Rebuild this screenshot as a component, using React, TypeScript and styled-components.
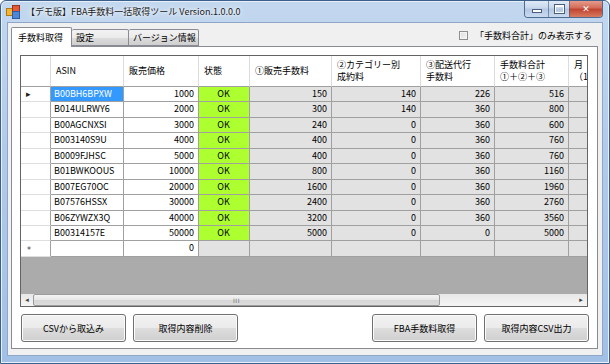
import React from "react"
import styled, { createGlobalStyle } from "styled-components"

type Fee = {
  asin: string
  price: number
  sale: number
  category: number
  fba: number
  total: number
}

const rows: Fee[] = [
  { asin: "B00BH6BPXW", price: 1000, sale: 150, category: 140, fba: 226, total: 516 },
  { asin: "B014ULRWY6", price: 2000, sale: 300, category: 140, fba: 360, total: 800 },
  { asin: "B00AGCNXSI", price: 3000, sale: 240, category: 0, fba: 360, total: 600 },
  { asin: "B003140S9U", price: 4000, sale: 400, category: 0, fba: 360, total: 760 },
  { asin: "B0009FJHSC", price: 5000, sale: 400, category: 0, fba: 360, total: 760 },
  { asin: "B01BWKOOUS", price: 10000, sale: 800, category: 0, fba: 360, total: 1160 },
  { asin: "B007EG70OC", price: 20000, sale: 1600, category: 0, fba: 360, total: 1960 },
  { asin: "B07576HSSX", price: 30000, sale: 2400, category: 0, fba: 360, total: 2760 },
  { asin: "B06ZYWZX3Q", price: 40000, sale: 3200, category: 0, fba: 360, total: 3560 },
  { asin: "B00314157E", price: 50000, sale: 5000, category: 0, fba: 0, total: 5000 },
]

// column widths in px; the last one is cut off by the grid edge
const W = { head: 30, asin: 73, price: 75, state: 51, sale: 82, category: 89, fba: 74, total: 74, month: 80 }

const GREEN = "#adff2f"
const GRAY = "#e2e2e2"

const AppIcon = () => (
  <svg width="14" height="14" viewBox="0 0 14 14">
    <rect x="0.5" y="3.5" width="7" height="7" fill="#f2b632" stroke="#b07a12" />
    <rect x="6.5" y="0.5" width="7" height="7" fill="#e25a3a" stroke="#9c3320" />
    <rect x="6.5" y="6.5" width="7" height="7" fill="#4f86d6" stroke="#2b5ca4" />
  </svg>
)

const App: React.FC = () => (
  <>
    <GlobalStyle />
    <Window>
      <TitleBar>
        <AppIcon />
        <Title>【デモ版】FBA手数料一括取得ツール Version.1.0.0.0</Title>
        <Caption>
          <CaptionButton $w={23}>
            <MinGlyph />
          </CaptionButton>
          <CaptionButton $w={20}>
            <MaxGlyph />
          </CaptionButton>
          <CaptionButton $w={32} $close>
            ✕
          </CaptionButton>
        </Caption>
      </TitleBar>

      <Client>
        <TabStrip>
          <Tab $active $w={61}>手数料取得</Tab>
          <Tab $w={57}>設定</Tab>
          <Tab $w={70}>バージョン情報</Tab>
          <CheckLabel>
            <CheckBox />
            「手数料合計」のみ表示する
          </CheckLabel>
        </TabStrip>

        <TabPanel>
          <Grid>
            <HeaderRow>
              <HeadCell $w={W.head} />
              <HeadCell $w={W.asin}>ASIN</HeadCell>
              <HeadCell $w={W.price}>販売価格</HeadCell>
              <HeadCell $w={W.state}>状態</HeadCell>
              <HeadCell $w={W.sale}>①販売手数料</HeadCell>
              <HeadCell $w={W.category}>
                ②カテゴリー別
                <br />
                成約料
              </HeadCell>
              <HeadCell $w={W.fba}>
                ③配送代行
                <br />
                手数料
              </HeadCell>
              <HeadCell $w={W.total}>
                手数料合計
                <br />
                ①＋②＋③
              </HeadCell>
              <HeadCell $w={W.month}>
                月
                <br />
                （1
              </HeadCell>
            </HeaderRow>

            {rows.map((r, i) => (
              <Row key={r.asin}>
                <RowHead>{i === 0 && <Pointer>▸</Pointer>}</RowHead>
                <Cell $w={W.asin} $bg={i === 0 ? "#3399ff" : "#fff"} $color={i === 0 ? "#fff" : "#000"}>
                  {r.asin}
                </Cell>
                <Cell $w={W.price} $align="right">{r.price}</Cell>
                <Cell $w={W.state} $align="center" $bg={GREEN}>OK</Cell>
                <Cell $w={W.sale} $align="right" $bg={GRAY}>{r.sale}</Cell>
                <Cell $w={W.category} $align="right" $bg={GRAY}>{r.category}</Cell>
                <Cell $w={W.fba} $align="right" $bg={GRAY}>{r.fba}</Cell>
                <Cell $w={W.total} $align="right" $bg={GRAY}>{r.total}</Cell>
                <Cell $w={W.month} $bg={GRAY} />
              </Row>
            ))}

            <Row>
              <RowHead>
                <Star>*</Star>
              </RowHead>
              <Cell $w={W.asin} />
              <Cell $w={W.price} $align="right">0</Cell>
              <Cell $w={W.state} $bg={GRAY} />
              <Cell $w={W.sale} $bg={GRAY} />
              <Cell $w={W.category} $bg={GRAY} />
              <Cell $w={W.fba} $bg={GRAY} />
              <Cell $w={W.total} $bg={GRAY} />
              <Cell $w={W.month} $bg={GRAY} />
            </Row>

            <Empty />

            <HScroll>
              <ArrowButton>◂</ArrowButton>
              <Thumb>
                <Grip>III</Grip>
              </Thumb>
              <Track />
              <ArrowButton>▸</ArrowButton>
            </HScroll>
          </Grid>

          <ButtonBar>
            <Button>CSVから取込み</Button>
            <Button>取得内容削除</Button>
            <Spacer />
            <Button>FBA手数料取得</Button>
            <Button>取得内容CSV出力</Button>
          </ButtonBar>
        </TabPanel>
      </Client>
    </Window>
  </>
)

const GlobalStyle = createGlobalStyle`
  html, body {
    margin: 0;
    padding: 0;
    background: #fff;
  }
  body {
    font-family: "Noto Sans CJK JP", "Noto Sans", sans-serif;
    font-size: 9px;
    color: #000;
  }
`

const Window = styled.div`
  width: 610px;
  height: 364px;
  box-sizing: border-box;
  display: flex;
  flex-direction: column;
  background: linear-gradient(180deg, #c3d8ef 0%, #b3cbea 40%, #a2c0e6 100%);
  border: 1px solid #3d5f8c;
  border-radius: 6px 6px 0 0;
  box-shadow: inset 0 0 0 1px #e6f0fb;
  overflow: hidden;
`

const TitleBar = styled.div`
  height: 21px;
  flex: none;
  display: flex;
  align-items: center;
  padding-left: 5px;
  gap: 6px;
`

const Title = styled.div`
  flex: 1;
  font-size: 9px;
  color: #1a1a1a;
  text-shadow: 0 0 6px #fff, 0 0 3px #fff;
  white-space: nowrap;
`

const Caption = styled.div`
  align-self: flex-start;
  display: flex;
  margin-right: 6px;
  margin-top: -1px;
  border: 1px solid #4d6a91;
  border-top: none;
  border-radius: 0 0 4px 4px;
  overflow: hidden;
`

const CaptionButton = styled.div<{ $w: number; $close?: boolean }>`
  width: ${(p) => p.$w}px;
  height: 17px;
  display: flex;
  align-items: center;
  justify-content: center;
  color: #fff;
  font-family: "DejaVu Sans", sans-serif;
  font-size: 9px;
  font-weight: bold;
  border-left: 1px solid rgba(60, 90, 130, 0.6);
  background: ${(p) =>
    p.$close
      ? "linear-gradient(180deg, #e8a293 0%, #d46d5a 45%, #c04531 55%, #d87a5f 100%)"
      : "linear-gradient(180deg, #e3ecf7 0%, #c9d8ec 45%, #b4c8e3 55%, #c9dbef 100%)"};
  &:first-child {
    border-left: none;
  }
`

const MinGlyph = styled.div`
  width: 8px;
  height: 2px;
  margin-top: 5px;
  background: #fff;
  box-shadow: 0 0 0 1px #4a5f7e;
`

const MaxGlyph = styled.div`
  width: 7px;
  height: 5px;
  border: 1px solid #fff;
  border-top-width: 2px;
  box-shadow: 0 0 0 1px #4a5f7e;
`

const Client = styled.div`
  flex: 1;
  margin: 0 6px 7px 6px;
  background: #f0f0f0;
  border: 1px solid #8ea7c6;
  display: flex;
  flex-direction: column;
  min-height: 0;
`

const TabStrip = styled.div`
  height: 23px;
  flex: none;
  display: flex;
  align-items: flex-end;
  padding-left: 3px;
  padding-right: 10px;
`

const Tab = styled.div<{ $active?: boolean; $w: number }>`
  width: ${(p) => p.$w}px;
  height: ${(p) => (p.$active ? 20 : 17)}px;
  box-sizing: border-box;
  display: flex;
  align-items: center;
  padding-left: ${(p) => (p.$active ? 6 : 4)}px;
  margin-bottom: ${(p) => (p.$active ? -1 : 0)}px;
  border: 1px solid #898c95;
  border-bottom: ${(p) => (p.$active ? "none" : "1px solid #898c95")};
  border-left: ${(p) => (p.$active ? "1px solid #898c95" : "none")};
  border-radius: 2px 2px 0 0;
  background: ${(p) => (p.$active ? "#fff" : "linear-gradient(180deg, #f2f2f2 0%, #ebebeb 50%, #dddddd 51%, #cfcfcf 100%)")};
  position: relative;
  z-index: ${(p) => (p.$active ? 1 : 0)};
  white-space: nowrap;
`

const CheckLabel = styled.label`
  margin-left: auto;
  align-self: center;
  display: flex;
  align-items: center;
  gap: 7px;
  margin-top: 2px;
  white-space: nowrap;
`

const CheckBox = styled.span`
  width: 9px;
  height: 9px;
  box-sizing: border-box;
  border: 1px solid #8f8f8f;
  background: linear-gradient(135deg, #dcdcdc, #f7f7f7);
  box-shadow: inset 0 0 0 1px #f4f4f4;
`

const TabPanel = styled.div`
  flex: 1;
  margin: 0 4px 6px 3px;
  border: 1px solid #898c95;
  background: #fff;
  display: flex;
  flex-direction: column;
  padding: 8px 8px 6px 8px;
  gap: 7px;
  min-height: 0;
`

const Grid = styled.div`
  width: 568px;
  height: 253px;
  box-sizing: border-box;
  border: 1px solid #646464;
  background: #ababab;
  display: flex;
  flex-direction: column;
  overflow: hidden;
`

const HeaderRow = styled.div`
  display: flex;
  height: 31px;
  flex: none;
  background: #fff;
`

const HeadCell = styled.div<{ $w: number }>`
  width: ${(p) => p.$w}px;
  flex: none;
  box-sizing: border-box;
  border-right: 1px solid #dcdcdc;
  border-bottom: 1px solid #a0a0a0;
  padding-left: 5px;
  display: flex;
  align-items: center;
  line-height: 12px;
  white-space: nowrap;
  overflow: hidden;
`

const Row = styled.div`
  display: flex;
  height: 15.45px;
  flex: none;
`

const RowHead = styled.div`
  width: ${W.head}px;
  flex: none;
  box-sizing: border-box;
  background: #fff;
  border-right: 1px solid #a0a0a0;
  border-bottom: 1px solid #dedede;
  display: flex;
  align-items: center;
  padding-left: 5px;
`

const Pointer = styled.span`
  font-family: "DejaVu Sans", sans-serif;
  font-size: 9px;
  color: #202020;
`

const Star = styled.span`
  font-family: "DejaVu Sans", sans-serif;
  font-size: 8px;
  color: #404040;
  padding-left: 1px;
  margin-top: 3px;
`

const Cell = styled.div<{ $w: number; $bg?: string; $color?: string; $align?: "left" | "right" | "center" }>`
  width: ${(p) => p.$w}px;
  flex: none;
  box-sizing: border-box;
  background: ${(p) => p.$bg ?? "#fff"};
  color: ${(p) => p.$color ?? "#000"};
  border-right: 1px solid #a0a0a0;
  border-bottom: 1px solid #a0a0a0;
  text-align: ${(p) => p.$align ?? "left"};
  padding: 0 4px 0 3px;
  line-height: 14px;
  white-space: nowrap;
  overflow: hidden;
`

const Empty = styled.div`
  flex: 1;
`

const HScroll = styled.div`
  height: 12px;
  flex: none;
  display: flex;
  background: linear-gradient(180deg, #e8e8e8, #f5f5f5);
`

const ArrowButton = styled.div`
  width: 12px;
  flex: none;
  display: flex;
  align-items: center;
  justify-content: center;
  font-family: "DejaVu Sans", sans-serif;
  font-size: 7px;
  color: #404040;
`

const Thumb = styled.div`
  width: 407px;
  flex: none;
  box-sizing: border-box;
  border: 1px solid #9c9c9c;
  border-radius: 2px;
  background: linear-gradient(180deg, #f4f4f4 0%, #e6e6e6 50%, #d6d6d6 51%, #dcdcdc 100%);
  display: flex;
  align-items: center;
  justify-content: center;
`

const Grip = styled.span`
  font-family: "DejaVu Sans", sans-serif;
  font-size: 6px;
  letter-spacing: 0.5px;
  color: #6a6a6a;
`

const Track = styled.div`
  flex: 1;
`

const ButtonBar = styled.div`
  display: flex;
  gap: 7px;
  padding-left: 1px;
`

const Spacer = styled.div`
  flex: 1;
`

const Button = styled.div`
  width: 105px;
  height: 28px;
  box-sizing: border-box;
  border: 1px solid #707070;
  border-radius: 3px;
  background: linear-gradient(180deg, #f2f2f2 0%, #ebebeb 50%, #dddddd 51%, #cfcfcf 100%);
  box-shadow: inset 0 0 0 1px #fcfcfc;
  display: flex;
  align-items: center;
  justify-content: center;
  white-space: nowrap;
`

export default App
